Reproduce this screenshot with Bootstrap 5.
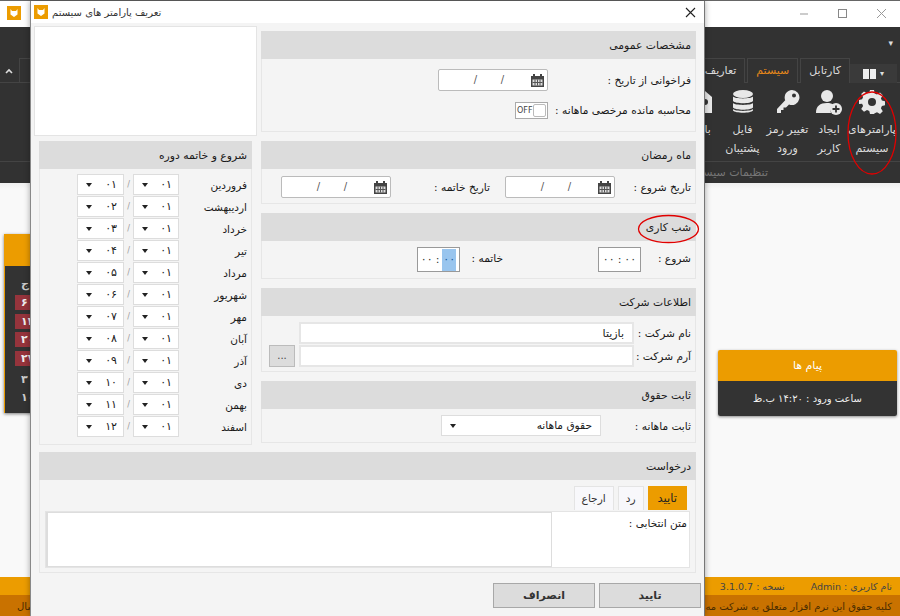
<!DOCTYPE html>
<html lang="fa" dir="rtl">
<head>
    <meta charset="UTF-8">
    <meta name="viewport" content="width=device-width, initial-scale=1.0">
    <title>تعریف پارامتر های سیستم</title>
    <link href="https://cdn.jsdelivr.net/npm/bootstrap@5.3.0/dist/css/bootstrap.min.css" rel="stylesheet">
    <style>
        html, body { height: 616px; overflow: hidden; }
        body { font-family: "DejaVu Sans", "Noto Sans", sans-serif; font-size: 10.6px; color: #1a1a1a; background: #f8f8f8; }

        /* main window behind the dialog */
        .app { height: 616px; position: relative; overflow: hidden; }
        .win-bar { height: 27px; background: #fff; border-top: 1px solid #666; }
        .win-logo { width: 14px; height: 14px; margin: 5px 7px 0 7px; }
        .ribbon { height: 156px; background: #323232; color: #ddd; }
        .rib-top { height: 31px; padding: 10px 7px 0 0; font-size: 9px; }
        .rib-tabs { height: 25px; border-bottom: 1px solid #444; padding-right: 3px; }
        .rib-view { width: 47px; height: 19px; margin-top: 6px; background: #3a3a3a; font-size: 8px; }
        .rib-tab { height: 25px; padding: 4px 8px 0; border: 1px solid #444; border-bottom: 0; margin-left: 2px; font-size: 11px; background: #323232; }
        .rib-tab-on { color: #e8891a; padding: 4px 8px 0; }
        .rib-left { position: absolute; left: 0; top: 58px; width: 30px; height: 25px; }
        .rib-left-box { width: 11px; height: 25px; border: 1px solid #444; border-right: 0; }
        .rib-btns { height: 79px; border-bottom: 1px solid #444; padding-right: 4px; }
        .rib-btn { text-align: center; line-height: 19px; font-size: 11px; padding-top: 6px; }
        .rib-btn svg { display: block; margin: 0 auto 5px; }
        .rib-foot { height: 21px; padding: 3px 132px 0 0; color: #777; white-space: nowrap; font-size: 11px; }
        .work { height: 394px; background: linear-gradient(#efefef, #f9f9f9 6px); padding: 0 3px 0 0; }
        .msg-card { width: 179px; margin-top: 167px; box-shadow: 0 1px 3px rgba(0,0,0,.45); border-radius: 2px; overflow: hidden; }
        .msg-head { height: 31px; background: #ec9c00; color: #fff; text-align: center; padding-top: 8px; font-size: 11px; }
        .msg-body { height: 35px; background: #333; color: #eee; text-align: center; padding-top: 10px; font-size: 10px; }
        .cal-card { width: 60px; height: 179px; margin-top: 51px; margin-left: 0; border-left: 1px solid #ec9c00; box-shadow: 0 1px 3px rgba(0,0,0,.5); flex-shrink: 0; position: relative; left: 4px; }
        .cal-head { height: 32px; background: #ec9c00; color: #fff; padding: 9px 0 0 0; }
        .cal-body { height: 147px; background: #333; color: #ccc; padding: 10px 0 0 0; font-size: 11px; }
        .cal-day { height: 15px; margin-bottom: 3.500px; margin-left: 10px; line-height: 15px; text-align: left; padding-left: 6px; font-weight: bold; }
        .cal-red { background: #96343c; color: #eee; }
        .status-a { position: absolute; top: 577px; left: 0; right: 0; height: 18px; background: #ec9c00; font-size: 9.500px; color: #444; padding: 3px 8px 0 0; gap: 26px; }
        .status-b { position: absolute; top: 595px; left: 0; right: 0; height: 21px; background: #c97200; color: #4a2c00; padding: 4px 8px 0 0; white-space: nowrap; font-size: 10px; }

        /* dialog */
        .dlg { position: absolute; left: 30px; top: 1px; width: 675px; height: 615px; background: #f4f4f4; border-left: 1px solid #888; border-right: 1px solid #777; box-shadow: 0 0 6px rgba(0,0,0,.35); }
        .dlg-title { height: 22px; background: #fff; padding: 0 8px 0 3px; font-size: 10px; color: #333; }
        .logo-box { width: 14px; height: 14px; flex-shrink: 0; }
        .dlg-grid { padding: 3px 8px 0 4px; gap: 4px; height: 560px; }
        .col-side-r { width: 435px; flex-shrink: 0; padding-top: 5px; }
        .col-side-l { width: 223px; flex-shrink: 0; }
        .pnl { margin-bottom: 9px; }
        .pnl-head { height: 28px; background: #dcdcdc; padding: 7px 5px 0 0; font-size: 10.800px; color: #1a1a1a; line-height: 15px; }
        .pnl-body { border: 1px solid #e6e6e6; border-top: 0; padding-right: 4px; }
        .logo-pane { height: 110px; background: #fff; border: 1px solid #e4e4e4; margin-bottom: 5px; }
        .lbl { flex-shrink: 0; line-height: 22px; white-space: nowrap; }
        .date-box { width: 110px; height: 22px; background: #fff; border: 1px solid #bbb; border-radius: 2px; padding: 0 2px 0 0; color: #555; }
        .date-box svg { flex-shrink: 0; margin-left: 14px; }
        .date-sl { width: 27px; text-align: center; line-height: 20px; font-size: 10px; }
        .tgl { width: 33px; height: 17px; background: #fff; border: 1px solid #aaa; padding: 1px; font-size: 8px; line-height: 13px; color: #444; direction: ltr; }
        .tgl-knob { width: 15px; height: 13px; border: 1px solid #bbb; border-radius: 2px; margin-left: auto; background: #fff; }
        .time-box { width: 43px; height: 25px; background: #fff; border: 1px solid #999; font-size: 11px; line-height: 21px; text-align: center; color: #333; direction: ltr; display: flex; justify-content: center; align-items: stretch; padding-top: 1px; gap: 3px; }
        .time-sel { background: #99c5ee; color: #1a5aa0; padding: 0 1px; }
        .txt-in.form-control { height: 22px; min-height: 0; border: 2px solid #e6e6e6; border-radius: 0; padding: 0 8px; font-size: 11px; color: #222; line-height: 18px; }
        .dots-btn.btn { width: 26px; height: 22px; background: #dcdcdc; border: 1px solid #bbb; border-radius: 0; padding: 0; font-size: 10px; line-height: 14px; color: #444; }
        .ddl { background: #fff; border: 1px solid #ddd; height: 21px; padding: 0 6px; line-height: 19px; font-size: 11px; position: relative; }
        .ddl::after { content: ""; position: absolute; left: 8px; top: 8px; border: 3.500px solid transparent; border-top: 4px solid #222; border-bottom: 0; }
        .ddl-day { width: 46px; }
        .ddl-mon { width: 47px; }
        .ddl-sal { width: 160px; padding: 0 8px; font-size: 10.600px; }
        .month-row { height: 22px; }
        .month-lbl { width: 68px; flex-shrink: 0; font-size: 10.500px; line-height: 22px; white-space: nowrap; }
        .month-sl { width: 9px; text-align: center; color: #999; font-size: 8px; line-height: 21px; }
        .tab-list.nav { height: 25px; padding-right: 3px; gap: 4px; border: 0; }
        .tab-item { height: 24px; border: 1px solid #e4e4e4; border-bottom: 0; background: #f8f8fb; padding: 0 7px; line-height: 23px; color: #333; font-size: 10.600px; text-decoration: none; }
        .tab-on { background: #ec9c00; border-color: #ec9c00; color: #222; font-size: 11.500px; padding: 0 9px; }
        .tab-pane-box { height: 57px; background: #fff; border: 1px solid #e4e4e4; padding-right: 2px; }
        .tab-area { width: 506px; height: 55px; border: 1px solid #ddd; border-left: 2px solid #ddd; margin-right: auto; background: #fff; }
        .dlg-foot-btn.btn { width: 102px; height: 25px; background: #dcdcdc; border: 1px solid #a8a8a8; border-radius: 0; padding: 0; font-size: 11px; font-weight: bold; line-height: 22px; color: #333; }
        .red-oval { position: absolute; pointer-events: none; }
    </style>
</head>
<body>
    <div class="app">
        <!-- پنجره اصلی -->
        <div class="win-bar d-flex" dir="ltr">
            <svg class="win-logo" viewBox="0 0 14 14"><rect width="14" height="14" fill="#ec9c00"/><path d="M3.500 3 5 5h4l1.500-2v5.500L7 11 3.500 8.500z" fill="#fff"/></svg>
            <div class="flex-grow-1"></div>
            <svg width="100" height="26" viewBox="0 0 100 26">
                <path d="M0 13h8" stroke="#999"/>
                <rect x="38.500" y="8.500" width="8" height="8" fill="none" stroke="#888"/>
                <path d="M77 8l9 9M86 8l-9 9" stroke="#999"/>
            </svg>
        </div>
        <div class="ribbon">
            <div class="rib-top">▾</div>
            <div class="rib-tabs d-flex">
                <div class="rib-view d-flex align-items-center justify-content-center gap-1" dir="ltr">
                    <svg width="13" height="10" viewBox="0 0 13 10"><rect width="13" height="10" fill="#eee"/><path d="M6.500 0v10" stroke="#333"/></svg><span>▾</span>
                </div>
                <div class="rib-tab">کارتابل</div>
                <div class="rib-tab rib-tab-on">سیستم</div>
                <div class="rib-tab">تعاریف</div>
            </div>
            <div class="rib-btns d-flex">
                <div class="rib-btn" style="width:48px">
                    <svg width="26" height="26" viewBox="0 0 26 26"><path fill="#e8e8e8" fill-rule="evenodd" d="M11 1h4l.7 3.400 2.300 1 3-1.900 2.800 2.800-1.900 3 1 2.300 3.100.7v4l-3.100.7-1 2.300 1.900 3-2.800 2.800-3-1.900-2.300 1L15 25h-4l-.7-3.100-2.300-1-3 1.900-2.800-2.800 1.900-3-1-2.300L0 15v-4l3.100-.7 1-2.300-1.900-3L5 2.500l3 1.900 2.300-1zM13 9a4 4 0 1 0 0 8 4 4 0 0 0 0-8z"/></svg>
                    پارامترهای<br>سیستم
                </div>
                <div class="rib-btn" style="width:38px">
                    <svg width="28" height="26" viewBox="0 0 28 26"><circle cx="12" cy="7" r="6" fill="#e8e8e8"/><path d="M1 24c0-7 4-10 11-10 3 0 5 .6 7 2a7 7 0 0 0-3 8z" fill="#e8e8e8"/><circle cx="21" cy="20" r="6" fill="#e8e8e8"/><path d="M21 16.500v7M17.500 20h7" stroke="#333" stroke-width="1.800"/></svg>
                    ایجاد<br>کاربر
                </div>
                <div class="rib-btn" style="width:45px">
                    <svg width="24" height="26" viewBox="0 0 24 26"><path fill="#e8e8e8" fill-rule="evenodd" d="M16 1a7.500 7.500 0 1 1-3 14.400L10 18.500H7.500V21H5v3H1v-4L9.200 11.300A7.500 7.500 0 0 1 16 1zm2 3.500a2 2 0 1 0 0 4 2 2 0 0 0 0-4z"/></svg>
                    تغییر رمز<br>ورود
                </div>
                <div class="rib-btn" style="width:45px">
                    <svg width="22" height="26" viewBox="0 0 22 26"><g fill="#e8e8e8"><ellipse cx="11" cy="5" rx="10" ry="4"/><path d="M1 7.500c2 2.500 18 2.500 20 0V12c-2 3-18 3-20 0z"/><path d="M1 14c2 2.500 18 2.500 20 0v4.500c-2 3-18 3-20 0z"/><path d="M1 20c2 2.500 18 2.500 20 0v1.500c-2 3-18 3-20 0z"/></g></svg>
                    فایل<br>پشتیبان
                </div>
                <div class="rib-btn" style="width:30px">
                    <svg width="14" height="26" viewBox="0 0 14 26"><path d="M7 2 14 8v16H0V8z" fill="#e8e8e8"/><circle cx="7" cy="13" r="3" fill="#333"/></svg>
                    باز
                </div>
            </div>
            <div class="rib-foot">تنظیمات سیستم</div>
        </div>
        <div class="rib-left d-flex align-items-center justify-content-between" dir="ltr">
            <svg width="18" height="10" viewBox="0 0 18 10"><path d="M6 7l3-3 3 3" fill="none" stroke="#ddd" stroke-width="1.600"/></svg>
            <div class="rib-left-box"></div>
        </div>
        <div class="work d-flex justify-content-between align-items-start">
            <div class="msg-card">
                <div class="msg-head">پیام ها</div>
                <div class="msg-body">ساعت ورود : ۱۴:۲۰ ب.ظ</div>
            </div>
            <div class="cal-card">
                <div class="cal-head">
                    <svg width="10" height="12" viewBox="0 0 10 12" class="d-block" style="margin-left:16px"><path d="M7.500 1.500 3 6l4.500 4.500" fill="none" stroke="#fff" stroke-width="2.500"/></svg>
                </div>
                <div class="cal-body">
                    <div class="cal-day" style="margin-bottom:4px">ج</div>
                    <div class="cal-day cal-red">۶</div>
                    <div class="cal-day cal-red">۱۳</div>
                    <div class="cal-day cal-red">۲۰</div>
                    <div class="cal-day cal-red">۲۷</div>
                    <div class="cal-day" style="margin-top:6px">۳</div>
                    <div class="cal-day">۱۰</div>
                </div>
            </div>
        </div>
        <div class="status-a d-flex">
            <span>نام کاربری : Admin</span>
            <span>نسخه : 3.1.0.7</span>
        </div>
        <div class="status-b d-flex justify-content-between">
            <div>کلیه حقوق این نرم افزار متعلق به شرکت مه</div>
            <div style="padding-left:17px">سال</div>
        </div>
        <svg class="red-oval" style="left:847px;top:90px" width="50" height="86" viewBox="0 0 50 86"><ellipse cx="25" cy="43" rx="24" ry="41" fill="none" stroke="#e00000" stroke-width="1.300"/></svg>

        <!-- پنجره تعریف پارامترها -->
        <div class="dlg">
            <div class="dlg-title d-flex align-items-center justify-content-between" dir="ltr">
                <div class="d-flex align-items-center gap-1">
                    <svg class="logo-box" viewBox="0 0 14 14"><rect width="14" height="14" fill="#ec9c00"/><path d="M3.500 3 5 5h4l1.500-2v5.500L7 11 3.500 8.500z" fill="#fff"/></svg>
                    <span dir="rtl">تعریف پارامتر های سیستم</span>
                </div>
                <svg width="11" height="11" viewBox="0 0 11 11"><path d="M1 1l9 9M10 1l-9 9" stroke="#222" stroke-width="1.100"/></svg>
            </div>
            <div class="dlg-grid d-flex">
                <div class="col-side-r">
                    <section class="pnl">
                        <div class="pnl-head">مشخصات عمومی</div>
                        <div class="pnl-body" style="height:73px;padding-top:10px">
                            <div class="d-flex">
                                <div class="lbl" style="width:143px">فراخوانی از تاریخ :</div>
                                <div class="date-box d-flex calendar-slot"></div>
                            </div>
                            <div class="d-flex align-items-center" style="margin-top:11px">
                                <div class="lbl" style="width:143px;line-height:17px">محاسبه مانده مرخصی ماهانه :</div>
                                <div class="tgl d-flex"><span>OFF</span><span class="tgl-knob"></span></div>
                            </div>
                        </div>
                    </section>
                    <section class="pnl">
                        <div class="pnl-head">ماه رمضان</div>
                        <div class="pnl-body d-flex" style="height:35px;padding-top:7px">
                            <div class="lbl" style="width:76px">تاریخ شروع :</div>
                            <div class="date-box d-flex calendar-slot"></div>
                            <div class="lbl" style="width:114px;padding-right:15px">تاریخ خاتمه :</div>
                            <div class="date-box d-flex calendar-slot"></div>
                        </div>
                    </section>
                    <section class="pnl">
                        <div class="pnl-head">شب کاری</div>
                        <div class="pnl-body d-flex" style="height:38px;padding-top:6px">
                            <div class="lbl" style="width:50px">شروع :</div>
                            <div class="time-box"><span>۰۰</span><span>:</span><span>۰۰</span></div>
                            <div class="lbl" style="width:138px;padding-right:95px">خاتمه :</div>
                            <div class="time-box"><span>۰۰</span><span>:</span><span class="time-sel">۰۰</span></div>
                        </div>
                    </section>
                    <section class="pnl">
                        <div class="pnl-head">اطلاعات شرکت</div>
                        <div class="pnl-body" style="height:56px;padding-top:6px">
                            <div class="d-flex" style="margin-bottom:1px">
                                <div class="lbl" style="width:57px">نام شرکت :</div>
                                <input class="form-control txt-in" style="width:335px" value="بازیتا">
                            </div>
                            <div class="d-flex">
                                <div class="lbl" style="width:57px">آرم شرکت :</div>
                                <input class="form-control txt-in" style="width:335px">
                                <button class="btn dots-btn" type="button" style="margin-right:4px">...</button>
                            </div>
                        </div>
                    </section>
                    <section class="pnl">
                        <div class="pnl-head">ثابت حقوق</div>
                        <div class="pnl-body d-flex" style="height:34px;padding-top:6px">
                            <div class="lbl" style="width:90px">ثابت ماهانه :</div>
                            <div class="ddl ddl-sal">حقوق ماهانه</div>
                        </div>
                    </section>
                </div>
                <div class="col-side-l">
                    <div class="logo-pane"></div>
                    <section style="margin:0 5px 0 5px">
                        <div class="pnl-head">شروع و خاتمه دوره</div>
                        <div class="pnl-body" id="monthRows" style="height:276px;padding-top:5px"></div>
                    </section>
                </div>
            </div>
            <section style="position:absolute;left:8px;top:451px;width:657px">
                <div class="pnl-head">درخواست</div>
                <div class="pnl-body" style="height:93px;padding:6px 5px 0 5px">
                    <nav class="nav tab-list">
                        <a class="tab-item tab-on" href="#">تایید</a>
                        <a class="tab-item" href="#">رد</a>
                        <a class="tab-item" href="#">ارجاع</a>
                    </nav>
                    <div class="tab-pane-box d-flex">
                        <div class="lbl">متن انتخابی :</div>
                        <div class="tab-area"></div>
                    </div>
                </div>
            </section>
            <div class="d-flex gap-1" style="position:absolute;right:3px;top:582px">
                <button class="btn dlg-foot-btn" type="button">تایید</button>
                <button class="btn dlg-foot-btn" type="button">انصراف</button>
            </div>
            <svg class="red-oval" style="left:606px;top:213px" width="63" height="30" viewBox="0 0 63 30"><ellipse cx="31.500" cy="15" rx="30" ry="13.500" fill="none" stroke="#e00000" stroke-width="1.300"/></svg>
        </div>
    </div>

    <script>
        // آیکن تقویم داخل فیلدهای تاریخ
        const calendarIcon = `<svg width="15" height="15" viewBox="0 0 15 15" style="margin-top:3px"><path d="M1 3h13v11H1z" fill="#444"/><path d="M4 1v3M11 1v3" stroke="#444" stroke-width="2"/><path d="M2.500 6.500h10v6h-10z" fill="#ddd"/><path d="M5 6.500v6M7.500 6.500v6M10 6.500v6M2.500 9.500h10" stroke="#555"/></svg>`;
        document.querySelectorAll(".calendar-slot").forEach(box => {
            box.innerHTML = calendarIcon + `<span class="date-sl">/</span><span class="date-sl">/</span>`;
        });

        // ماه های سال با روز و ماه شروع دوره
        const months = ["فروردین", "اردیبهشت", "خرداد", "تیر", "مرداد", "شهریور", "مهر", "آبان", "آذر", "دی", "بهمن", "اسفند"];
        const faDigits = n => String(n).padStart(2, "0").replace(/\d/g, d => "۰۱۲۳۴۵۶۷۸۹"[d]);
        const rows = document.getElementById("monthRows");
        months.forEach((name, i) => {
            const row = document.createElement("div");
            row.className = "month-row d-flex";
            row.innerHTML = `
                <div class="month-lbl">${name}</div>
                <div class="ddl ddl-day">۰۱</div>
                <div class="month-sl">/</div>
                <div class="ddl ddl-mon">${faDigits(i + 1)}</div>
            `;
            rows.appendChild(row);
        });
    </script>
</body>
</html>
